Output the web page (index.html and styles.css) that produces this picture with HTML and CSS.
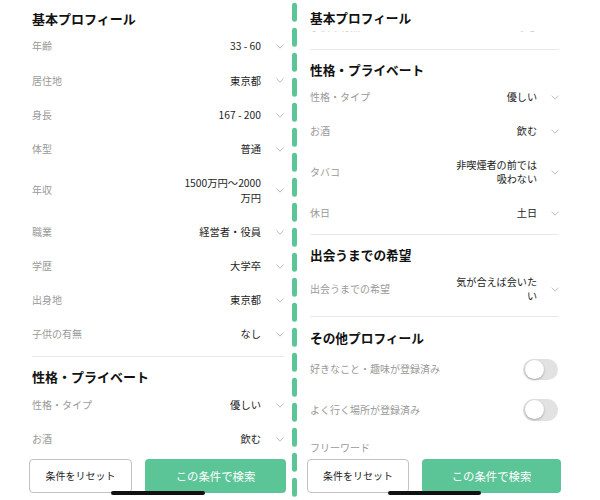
FILE: index.html
```html
<!DOCTYPE html>
<html lang="ja">
<head>
<meta charset="utf-8">
<title>検索条件</title>
<link rel="stylesheet" href="styles.css">
</head>
<body>
<div class="page">
  <section class="panel panel--left">
    <div class="panel__body">
      <div class="group">
        <h2 class="group__title">基本プロフィール</h2>
        <div class="row"><span class="row__label">年齢</span><span class="row__value">33 - 60</span><svg class="chev" viewBox="0 0 8 5"><polyline points="0.5,0.6 4,4.2 7.5,0.6"/></svg></div>
        <div class="row"><span class="row__label">居住地</span><span class="row__value">東京都</span><svg class="chev" viewBox="0 0 8 5"><polyline points="0.5,0.6 4,4.2 7.5,0.6"/></svg></div>
        <div class="row"><span class="row__label">身長</span><span class="row__value">167 - 200</span><svg class="chev" viewBox="0 0 8 5"><polyline points="0.5,0.6 4,4.2 7.5,0.6"/></svg></div>
        <div class="row"><span class="row__label">体型</span><span class="row__value">普通</span><svg class="chev" viewBox="0 0 8 5"><polyline points="0.5,0.6 4,4.2 7.5,0.6"/></svg></div>
        <div class="row"><span class="row__label">年収</span><span class="row__value">1500万円〜2000万円</span><svg class="chev" viewBox="0 0 8 5"><polyline points="0.5,0.6 4,4.2 7.5,0.6"/></svg></div>
        <div class="row"><span class="row__label">職業</span><span class="row__value">経営者・役員</span><svg class="chev" viewBox="0 0 8 5"><polyline points="0.5,0.6 4,4.2 7.5,0.6"/></svg></div>
        <div class="row"><span class="row__label">学歴</span><span class="row__value">大学卒</span><svg class="chev" viewBox="0 0 8 5"><polyline points="0.5,0.6 4,4.2 7.5,0.6"/></svg></div>
        <div class="row"><span class="row__label">出身地</span><span class="row__value">東京都</span><svg class="chev" viewBox="0 0 8 5"><polyline points="0.5,0.6 4,4.2 7.5,0.6"/></svg></div>
        <div class="row"><span class="row__label">子供の有無</span><span class="row__value">なし</span><svg class="chev" viewBox="0 0 8 5"><polyline points="0.5,0.6 4,4.2 7.5,0.6"/></svg></div>
      </div>
      <div class="group">
        <h2 class="group__title">性格・プライベート</h2>
        <div class="row"><span class="row__label">性格・タイプ</span><span class="row__value">優しい</span><svg class="chev" viewBox="0 0 8 5"><polyline points="0.5,0.6 4,4.2 7.5,0.6"/></svg></div>
        <div class="row"><span class="row__label">お酒</span><span class="row__value">飲む</span><svg class="chev" viewBox="0 0 8 5"><polyline points="0.5,0.6 4,4.2 7.5,0.6"/></svg></div>
      </div>
    </div>
    <div class="bar">
      <button class="btn btn--reset">条件をリセット</button>
      <button class="btn btn--search">この条件で検索</button>
    </div>
    <div class="home"></div>
  </section>

  <div class="divider">
    <svg class="divider__svg" width="5" height="500" viewBox="0 0 5 500"><line x1="2.5" y1="5.2" x2="2.5" y2="500" stroke-width="5" stroke-linecap="round" stroke-dasharray="14 11"/></svg>
  </div>

  <section class="panel panel--right">
    <div class="panel__body">
      <div class="group">
        <h2 class="group__title">基本プロフィール</h2>
        <div class="clip">
          <div class="row"><span class="row__label">子供の有無</span><span class="row__value">なし</span><svg class="chev" viewBox="0 0 8 5"><polyline points="0.5,0.6 4,4.2 7.5,0.6"/></svg></div>
        </div>
      </div>
      <div class="group">
        <h2 class="group__title">性格・プライベート</h2>
        <div class="row"><span class="row__label">性格・タイプ</span><span class="row__value">優しい</span><svg class="chev" viewBox="0 0 8 5"><polyline points="0.5,0.6 4,4.2 7.5,0.6"/></svg></div>
        <div class="row"><span class="row__label">お酒</span><span class="row__value">飲む</span><svg class="chev" viewBox="0 0 8 5"><polyline points="0.5,0.6 4,4.2 7.5,0.6"/></svg></div>
        <div class="row"><span class="row__label">タバコ</span><span class="row__value">非喫煙者の前では吸わない</span><svg class="chev" viewBox="0 0 8 5"><polyline points="0.5,0.6 4,4.2 7.5,0.6"/></svg></div>
        <div class="row"><span class="row__label">休日</span><span class="row__value">土日</span><svg class="chev" viewBox="0 0 8 5"><polyline points="0.5,0.6 4,4.2 7.5,0.6"/></svg></div>
      </div>
      <div class="group">
        <h2 class="group__title">出会うまでの希望</h2>
        <div class="row"><span class="row__label">出会うまでの希望</span><span class="row__value">気が合えば会いたい</span><svg class="chev" viewBox="0 0 8 5"><polyline points="0.5,0.6 4,4.2 7.5,0.6"/></svg></div>
      </div>
      <div class="group">
        <h2 class="group__title">その他プロフィール</h2>
        <div class="toggles">
          <div class="toggle-row"><span class="row__label">好きなこと・趣味が登録済み</span><span class="toggle"></span></div>
          <div class="toggle-row"><span class="row__label">よく行く場所が登録済み</span><span class="toggle"></span></div>
        </div>
        <div class="freeword">フリーワード</div>
      </div>
    </div>
    <div class="bar">
      <button class="btn btn--reset">条件をリセット</button>
      <button class="btn btn--search">この条件で検索</button>
    </div>
    <div class="home"></div>
  </section>
</div>
</body>
</html>
```

FILE: styles.css
```css
html, body {
  margin: 0;
  padding: 0;
  background: #fff;
}

body {
  font-family: "Noto Sans CJK JP", "Noto Sans", sans-serif;
  color: #222;
}

.page {
  display: flex;
  width: 600px;
  height: 500px;
  overflow: hidden;
}

.panel {
  position: relative;
  display: flex;
  flex-direction: column;
  height: 500px;
  box-sizing: border-box;
  flex: none;
}

.panel--left {
  width: 292px;
  padding: 0 8px 0 32px;
  --title-fs: 13px;
  --title-lh: 20.8px;
  --first-pad: 8.8px;
  --sep-gap: 4.2px;
  --group-pad: 10.4px;
  --row-pad: 9.9px;
  --lh: 14.4px;
  --val-fs: 10.3px;
  --chev-gap: 15px;
  --chev-right: 0px;
  --reset-w: 103px;
}

.panel--right {
  width: 303px;
  padding: 0 41px 0 13px;
  --title-fs: 12.7px;
  --title-lh: 20px;
  --first-pad: 8.4px;
  --sep-gap: 3.3px;
  --group-pad: 10.4px;
  --row-pad: 10px;
  --lh: 14px;
  --val-fs: 10.1px;
  --chev-gap: 13.5px;
  --chev-right: 0.5px;
  --reset-w: 102px;
}

.panel__body {
  flex: 1;
  min-height: 0;
  overflow: hidden;
}

.divider {
  width: 5px;
  flex: none;
  height: 500px;
}

.divider__svg {
  display: block;
  stroke: #5cc597;
}

.group {
  padding-top: var(--first-pad);
}

.group + .group {
  margin-top: var(--sep-gap);
  border-top: 1px solid #e9e9e9;
  padding-top: var(--group-pad);
}

.group__title {
  margin: 0;
  font-size: var(--title-fs);
  line-height: var(--title-lh);
  font-weight: 700;
  color: #111;
}

.row {
  display: flex;
  align-items: center;
  padding: var(--row-pad) 0;
}

.row__label {
  flex: 1;
  font-size: 10px;
  line-height: var(--lh);
  color: #9a9a9a;
  white-space: nowrap;
}

.row__value {
  max-width: 82px;
  text-align: right;
  font-size: var(--val-fs);
  line-height: var(--lh);
  color: #1e1e1e;
}

.chev {
  flex: none;
  width: 8px;
  height: 5px;
  margin-left: var(--chev-gap);
  margin-right: var(--chev-right);
  fill: none;
  stroke: #bcbcbc;
  stroke-width: 1;
}

.clip {
  height: 14.4px;
  margin-top: 3px;
  overflow: hidden;
}

.clip .row {
  margin-top: -21.6px;
}

.clip .row__label,
.clip .row__value {
  color: #c8c8c8;
}

.toggles {
  margin-top: 1.3px;
}

.toggle-row {
  display: flex;
  align-items: center;
  padding: 9.5px 0;
}

.toggle {
  position: relative;
  flex: none;
  width: 35px;
  height: 21.5px;
  margin-right: 0.7px;
  border-radius: 11px;
  background: #e2e2e2;
}

.toggle::after {
  content: "";
  position: absolute;
  left: 1.4px;
  top: 1.25px;
  width: 19px;
  height: 19px;
  border-radius: 50%;
  background: #fff;
  box-shadow: 0 1px 2.5px rgba(0, 0, 0, 0.28);
}

.freeword {
  margin-top: 10.9px;
  font-size: 10px;
  line-height: 14px;
  color: #9a9a9a;
}

.bar {
  flex: none;
  display: flex;
  gap: 13px;
  height: 43px;
  box-sizing: border-box;
  padding-top: 2.3px;
  margin: 0 -2px 0 -3px;
  background: #fff;
}

.btn {
  height: 33.4px;
  box-sizing: border-box;
  border-radius: 4px;
  font-family: inherit;
  padding: 0;
  cursor: pointer;
}

.btn--reset {
  flex: none;
  width: var(--reset-w);
  border: 1px solid #c2c2c2;
  background: #fff;
  color: #222;
  font-size: 10px;
}

.btn--search {
  flex: 1;
  border: none;
  background: #5cc597;
  color: #fff;
  font-size: 11.4px;
}

.home {
  position: absolute;
  height: 4px;
  border-radius: 2px;
  background: #111;
}

.panel--left .home {
  left: 111px;
  top: 490.5px;
  width: 94px;
}

.panel--right .home {
  left: 91px;
  top: 491px;
  width: 93px;
}
```
